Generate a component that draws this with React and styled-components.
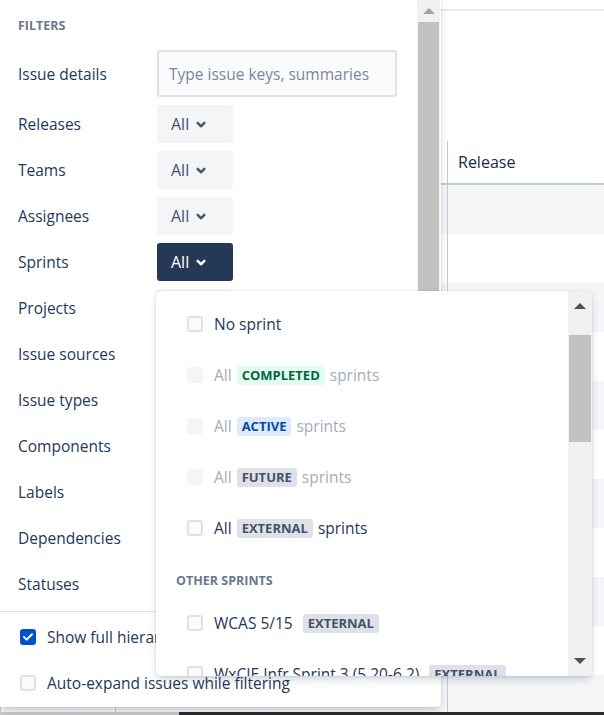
import React from 'react'
import styled, { createGlobalStyle } from 'styled-components'

const Global = createGlobalStyle`
  body {
    margin: 0;
    font-family: "Open Sans", "Noto Sans", sans-serif;
    color: #172b4d;
    background: #fff;
  }
`

const Sayfa = styled.div`
  position: relative;
  width: 604px;
  height: 715px;
  overflow: hidden;
  background: #fff;
  display: flex;
  flex-direction: column;
`

const Tablo = styled.div`
  flex: 1;
  overflow: hidden;
  display: flex;
  flex-direction: column;
`

const UstBosluk = styled.div`
  height: 130px;
  margin-top: 9px;
  border-top: 2px solid #ebecf0;
  flex-shrink: 0;
`

const Satir = styled.div`
  display: grid;
  grid-template-columns: 115px 332px 1fr;
  height: ${p => p.h || 49}px;
  flex-shrink: 0;
  background: ${p => (p.gri ? '#f4f5f7' : '#fff')};
  border-bottom: ${p => (p.baslik ? '2px solid #c1c7d0' : 'none')};
  box-sizing: border-box;
`

const Hucre = styled.div`
  border-left: 1px solid #c1c7d0;
  display: flex;
  align-items: center;
  padding-left: 10px;
  font-size: 16px;
  color: #172b4d;
`

const AltSerit = styled.div`
  height: 3px;
  display: flex;
  flex-shrink: 0;
`
const AltParca = styled.div`
  width: ${p => p.w || 'auto'};
  flex: ${p => (p.w ? 'none' : 1)};
  background: ${p => p.renk};
`

const Panel = styled.div`
  position: absolute;
  top: 0;
  left: 0;
  width: 441px;
  height: 707px;
  background: #fff;
  border-radius: 0 0 4px 0;
  box-shadow: 0 4px 8px -2px rgba(9, 30, 66, 0.25), 0 0 1px rgba(9, 30, 66, 0.31);
  display: flex;
  flex-direction: column;
  overflow: hidden;
`

const KaydirmaAlani = styled.div`
  height: 611px;
  display: flex;
  flex-shrink: 0;
`

const Icerik = styled.div`
  flex: 1;
  padding: 16px 0 8px 18px;
  overflow: hidden;
`

const Baslik = styled.div`
  font-size: 12.5px;
  font-weight: 700;
  color: #6b778c;
  text-transform: uppercase;
  height: 20px;
  line-height: 20px;
  margin-bottom: 14px;
`

const FiltreSatiri = styled.div`
  display: grid;
  grid-template-columns: 139px auto;
  align-items: center;
  height: ${p => p.h || 38}px;
  margin-bottom: 8px;
  font-size: 15.5px;
  color: #253858;
`

const Girdi = styled.input`
  width: 240px;
  height: 47px;
  box-sizing: border-box;
  border: 2px solid #dfe1e6;
  border-radius: 3px;
  background: #fafbfc;
  padding: 0 10px;
  font-family: inherit;
  font-size: 15.5px;
  color: #172b4d;
  outline: none;
  &::placeholder {
    color: #7a869a;
  }
`

const Dugme = styled.button`
  width: 76px;
  height: 38px;
  border: none;
  border-radius: 3px;
  padding: 0 0 0 14px;
  display: flex;
  align-items: center;
  font-family: inherit;
  font-size: 16px;
  background: ${p => (p.secili ? '#253858' : '#f4f5f7')};
  color: ${p => (p.secili ? '#fff' : '#42526e')};
  cursor: pointer;
  svg {
    margin-left: -1px;
  }
`

const KaydirmaCubugu = styled.div`
  width: 23px;
  background: #f1f1f1;
  display: flex;
  flex-direction: column;
  align-items: center;
  flex-shrink: 0;
  margin-right: 1px;
`

const Ok = styled.div`
  height: ${p => p.h || 22}px;
  width: 100%;
  display: flex;
  align-items: center;
  justify-content: center;
  flex-shrink: 0;
  &::before {
    content: '';
    border-left: 6px solid transparent;
    border-right: 6px solid transparent;
    ${p => (p.asagi ? 'border-top' : 'border-bottom')}: 6px solid ${p => p.renk || '#a3a3a3'};
  }
`

const Tutamac = styled.div`
  width: calc(100% - 2px);
  height: ${p => p.h}px;
  margin-top: ${p => p.ust || 0}px;
  background: #c1c1c1;
  flex-shrink: 0;
`

const Alt = styled.div`
  border-top: 1px solid #dfe1e6;
  padding: 2px 0 0 20px;
`

const OnaySatiri = styled.label`
  display: flex;
  align-items: center;
  height: 46px;
  gap: 11px;
  font-size: 15.5px;
  color: #253858;
  white-space: nowrap;
`

const Kutu = styled.span`
  width: 16px;
  height: 16px;
  box-sizing: border-box;
  border-radius: 3px;
  flex-shrink: 0;
  display: inline-flex;
  align-items: center;
  justify-content: center;
  background: ${p => (p.isaretli ? '#0052cc' : p.pasif ? '#f4f5f7' : '#fafbfc')};
  border: 2px solid ${p => (p.isaretli ? '#0052cc' : p.pasif ? '#f4f5f7' : '#dfe1e6')};
`

const Acilir = styled.div`
  position: absolute;
  left: 156px;
  top: 291px;
  width: 436px;
  height: 385px;
  background: #fff;
  border-radius: 4px;
  box-shadow: 0 4px 8px -2px rgba(9, 30, 66, 0.25), 0 0 1px rgba(9, 30, 66, 0.31);
  display: flex;
  overflow: hidden;
`

const Liste = styled.div`
  flex: 1;
  padding-top: 7px;
  overflow: hidden;
`

const Oge = styled.div`
  display: flex;
  align-items: center;
  height: 51px;
  padding-left: 31px;
  gap: 11px;
  font-size: 15.5px;
  white-space: nowrap;
  color: ${p => (p.pasif ? '#a5adba' : '#253858')};
`

const GrupBaslik = styled.div`
  margin: 16px 0 4px;
  height: 24px;
  line-height: 24px;
  padding-left: 20px;
  font-size: 12.5px;
  font-weight: 700;
  color: #6b778c;
  text-transform: uppercase;
`

const renkler = {
  yesil: ['#e3fcef', '#006644'],
  mavi: ['#deebff', '#0747a6'],
  gri: ['#dfe1e6', '#42526e']
}

const Rozet = styled.span`
  display: inline-block;
  height: 19px;
  line-height: 19px;
  padding: 0 5px;
  border-radius: 3px;
  font-size: 13px;
  font-weight: 700;
  text-transform: uppercase;
  vertical-align: 1px;
  margin: ${p => p.m || '0 5px'};
  background: ${p => renkler[p.tur][0]};
  color: ${p => renkler[p.tur][1]};
`

const AcilirCubuk = styled(KaydirmaCubugu)`
  width: 24px;
  margin-right: 0;
  padding-top: 2px;
`

const Bosluk = styled.div`
  flex: 1;
`

const Chevron = () => (
  <svg width='26' height='26' viewBox='0 0 24 24' aria-hidden='true'>
    <path
      fill='currentColor'
      stroke='currentColor'
      strokeWidth='0.4'
      d='M8.292 10.293a1.009 1.009 0 0 0 0 1.419l2.939 2.965c.218.215.5.322.779.322s.556-.107.769-.322l2.93-2.955a1.01 1.01 0 0 0 0-1.419.987.987 0 0 0-1.406 0l-2.298 2.317-2.307-2.327a.99.99 0 0 0-1.406 0z'
    />
  </svg>
)

const Tik = () => (
  <svg width='10' height='8' viewBox='0 0 10 8' aria-hidden='true'>
    <path d='M1 4l2.6 2.6L9 1.2' fill='none' stroke='#fff' strokeWidth='2' strokeLinecap='round' strokeLinejoin='round' />
  </svg>
)

const filtreler = [
  'Releases', 'Teams', 'Assignees', 'Sprints', 'Projects', 'Issue sources',
  'Issue types', 'Components', 'Labels', 'Dependencies', 'Statuses'
]

const sprintler = [
  { ad: 'No sprint' },
  { rozet: 'Completed', tur: 'yesil', pasif: true },
  { rozet: 'Active', tur: 'mavi', pasif: true },
  { rozet: 'Future', tur: 'gri', pasif: true },
  { rozet: 'External', tur: 'gri' }
]

const digerleri = ['WCAS 5/15', 'WxCIE Infr Sprint 3 (5.20-6.2)']

export default function App () {
  return (
    <Sayfa>
      <Global />
      <Tablo>
        <UstBosluk />
        <Satir h={44} baslik>
          <Hucre />
          <Hucre />
          <Hucre>Release</Hucre>
        </Satir>
        {Array.from({ length: 11 }).map((_, i) => (
          <Satir key={i} gri={i % 2 === 0}>
            <Hucre />
            <Hucre />
            <Hucre />
          </Satir>
        ))}
      </Tablo>
      <AltSerit>
        <AltParca w='179px' renk='#c6c6c6' />
        <AltParca renk='#2b2b2b' />
      </AltSerit>

      <Panel>
        <KaydirmaAlani>
          <Icerik>
            <Baslik>Filters</Baslik>
            <FiltreSatiri h={47}>
              <span>Issue details</span>
              <Girdi placeholder='Type issue keys, summaries' />
            </FiltreSatiri>
            {filtreler.map(f => (
              <FiltreSatiri key={f}>
                <span>{f}</span>
                <div>
                  <Dugme secili={f === 'Sprints'}>
                    All
                    <Chevron />
                  </Dugme>
                </div>
              </FiltreSatiri>
            ))}
          </Icerik>
          <KaydirmaCubugu>
            <Ok />
            <Tutamac h={589} />
          </KaydirmaCubugu>
        </KaydirmaAlani>
        <Alt>
          <OnaySatiri>
            <Kutu isaretli><Tik /></Kutu>
            Show full hierarchy
          </OnaySatiri>
          <OnaySatiri>
            <Kutu />
            Auto-expand issues while filtering
          </OnaySatiri>
        </Alt>
      </Panel>

      <Acilir>
        <Liste>
          {sprintler.map((s, i) => (
            <Oge key={i} pasif={s.pasif}>
              <Kutu pasif={s.pasif} />
              {s.ad
                ? <span>{s.ad}</span>
                : <span>All<Rozet tur={s.tur}>{s.rozet}</Rozet>sprints</span>}
            </Oge>
          ))}
          <GrupBaslik>Other sprints</GrupBaslik>
          {digerleri.map(d => (
            <Oge key={d}>
              <Kutu />
              <span>{d}<Rozet tur='gri' m='0 0 0 10px'>External</Rozet></span>
            </Oge>
          ))}
        </Liste>
        <AcilirCubuk>
          <Ok h={26} renk='#505050' />
          <Tutamac ust={16} h={107} />
          <Bosluk />
          <Ok h={30} asagi renk='#505050' />
        </AcilirCubuk>
      </Acilir>
    </Sayfa>
  )
}
